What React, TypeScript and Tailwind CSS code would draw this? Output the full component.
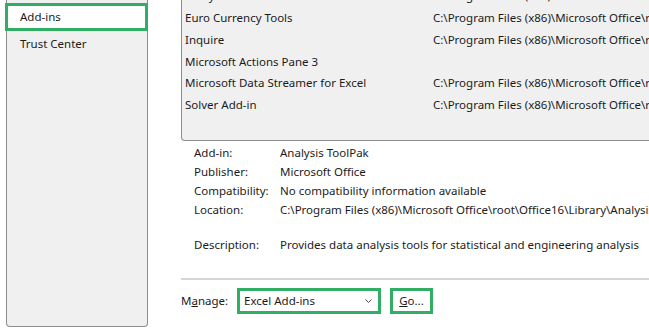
import React from "react";

const addins = [
  { name: "Analysis ToolPak", path: "C:\\Program Files (x86)\\Microsoft Office\\root\\Office16\\Library\\Analysis\\ANALYS32.XLL" },
  { name: "Euro Currency Tools", path: "C:\\Program Files (x86)\\Microsoft Office\\root\\Office16\\Library\\EUROTOOL.XLAM" },
  { name: "Inquire", path: "C:\\Program Files (x86)\\Microsoft Office\\root\\Office16\\DCF\\NativeShim.dll" },
  { name: "Microsoft Actions Pane 3", path: "" },
  { name: "Microsoft Data Streamer for Excel", path: "C:\\Program Files (x86)\\Microsoft Office\\root\\Office16\\ADDINS\\DataStreamer.dll" },
  { name: "Solver Add-in", path: "C:\\Program Files (x86)\\Microsoft Office\\root\\Office16\\Library\\SOLVER\\SOLVER.XLAM" },
];

const details = [
  { label: "Add-in:", value: "Analysis ToolPak" },
  { label: "Publisher:", value: "Microsoft Office" },
  { label: "Compatibility:", value: "No compatibility information available" },
  { label: "Location:", value: "C:\\Program Files (x86)\\Microsoft Office\\root\\Office16\\Library\\Analysis\\ANALYS32.XLL" },
];

export default function App() {
  return (
    <div className="flex h-[331px] w-[649px] overflow-hidden bg-white font-['Segoe_UI','Noto_Sans',sans-serif] text-[11.5px] text-[#1b1b1b]">
      {/* left nav */}
      <div className="ml-[6px] flex h-[327px] w-[142px] shrink-0 flex-col rounded-b-[4px] border-x border-b border-[#8c8c8c] bg-[#f0f0f0]">
        <div className="-ml-[2px] mt-[3px] flex h-[28px] w-[143px] items-center border-[3px] border-[#2fae64] bg-white pl-[12px]">
          Add-ins
        </div>
        <div className="flex h-[26px] items-center pl-[13px]">Trust Center</div>
      </div>

      {/* right content */}
      <div className="ml-[33px] flex min-w-0 flex-1 flex-col">
        <div className="-mt-[15px] h-[156px] shrink-0 overflow-hidden rounded-bl-[4px] border-b border-l border-[#8c8c8c] bg-[#f0f0f0]">
          {addins.map((a) => (
            <div key={a.name} className="flex h-[21.75px] items-center whitespace-nowrap pl-[3px]">
              <span className="w-[248px] shrink-0">{a.name}</span>
              <span>{a.path}</span>
            </div>
          ))}
        </div>

        <div className="mt-[2px] flex flex-col pl-[13px]">
          {details.map((d) => (
            <div key={d.label} className="flex h-[19px] items-center whitespace-nowrap">
              <span className="w-[86px] shrink-0">{d.label}</span>
              <span>{d.value}</span>
            </div>
          ))}
          <div className="mt-[16px] flex h-[19px] items-center whitespace-nowrap">
            <span className="w-[86px] shrink-0">Description:</span>
            <span>Provides data analysis tools for statistical and engineering analysis</span>
          </div>
        </div>

        <div className="mt-[24px] h-[2px] w-full bg-[#d6d6d6]" />

        <div className="mt-[8px] flex items-center">
          <span className="w-[56px] shrink-0">
            M<span className="underline">a</span>nage:
          </span>
          <div className="flex h-[26px] w-[144px] items-center justify-between border-[3px] border-[#2fae64] bg-white pl-[4px] pr-[6px]">
            <span>Excel Add-ins</span>
            <svg width="7" height="4" viewBox="0 0 7 4" fill="none" stroke="#444" strokeWidth="1">
              <polyline points="0.5 0.5 3.5 3.5 6.5 0.5" />
            </svg>
          </div>
          <div className="ml-[9px] flex h-[26px] w-[43px] items-center justify-center border-[3px] border-[#2fae64] bg-white">
            <span>
              <span className="underline">G</span>o...
            </span>
          </div>
        </div>
      </div>
    </div>
  );
}
